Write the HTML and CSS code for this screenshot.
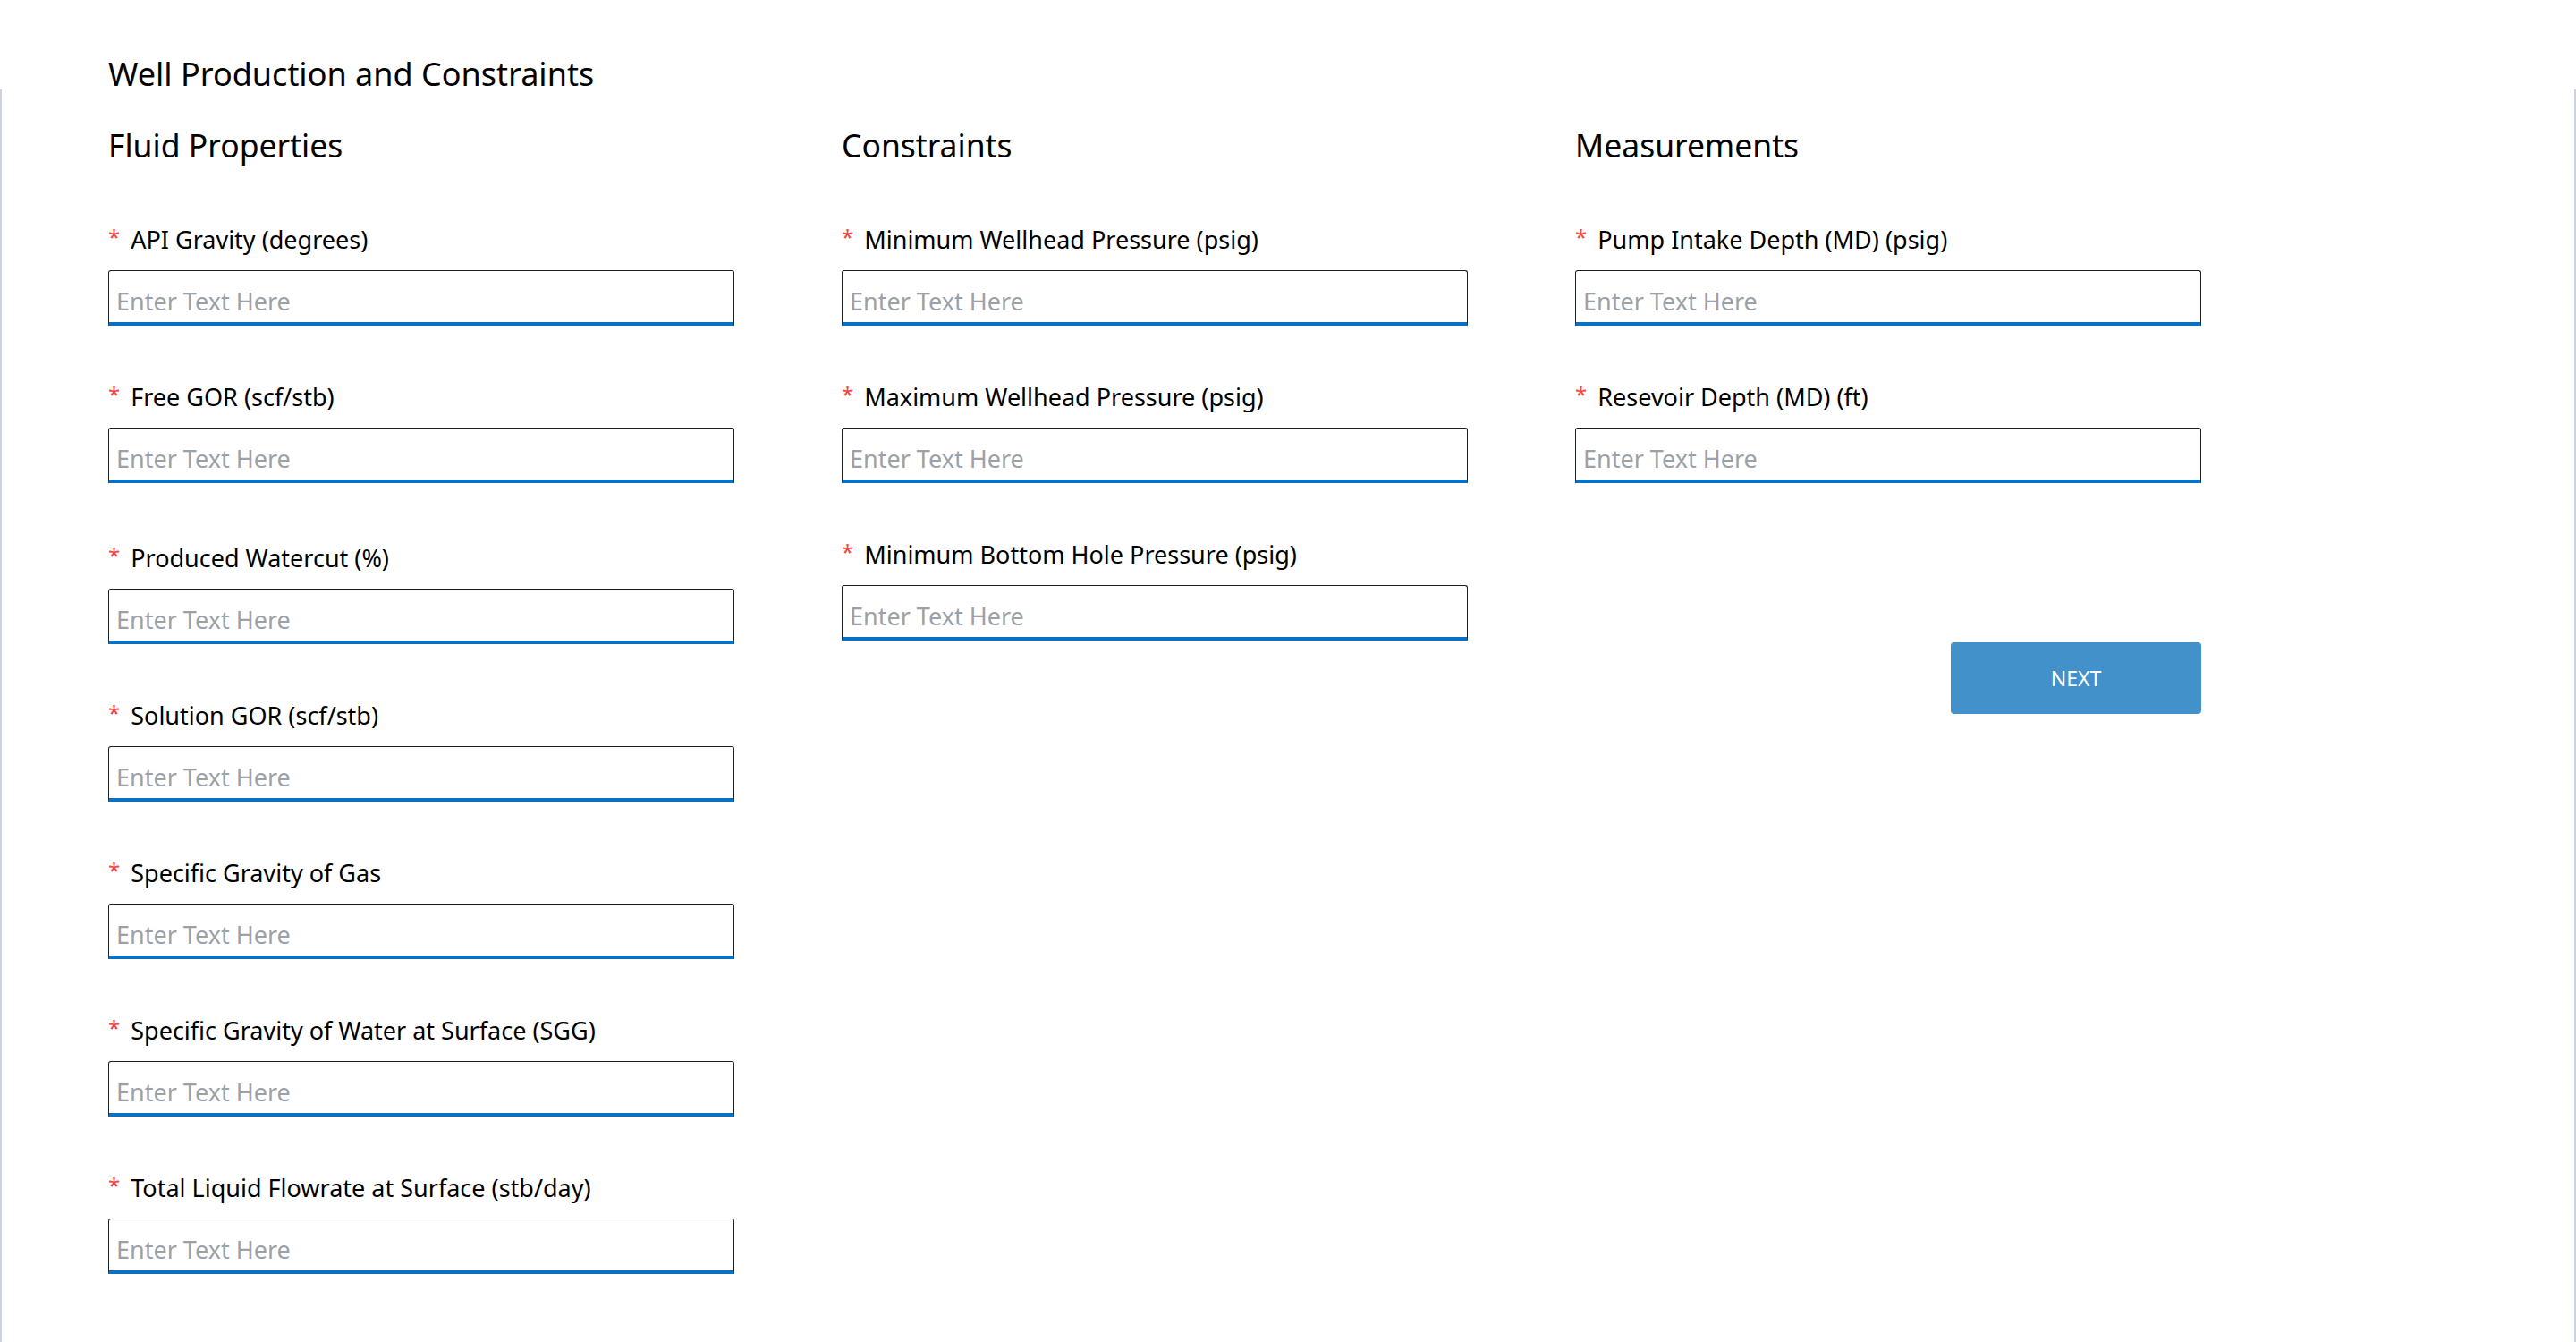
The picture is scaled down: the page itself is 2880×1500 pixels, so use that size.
FILE: index.html
```html
<!DOCTYPE html>
<html lang="en">
<head>
<meta charset="utf-8">
<title>Well Production and Constraints</title>
<link rel="stylesheet" href="styles.css">
</head>
<body>
<header class="page-header">
  <h1 class="page-title">Well Production and Constraints</h1>
</header>
<main class="panel">
  <div class="columns">
    <section class="column">
      <h2 class="section-title">Fluid Properties</h2>
      <div class="fields">
        <div class="field">
          <label class="field-label"><span class="req">*</span>API Gravity (degrees)</label>
          <input class="text-input" type="text" placeholder="Enter Text Here">
        </div>
        <div class="field">
          <label class="field-label"><span class="req">*</span>Free GOR (scf/stb)</label>
          <input class="text-input" type="text" placeholder="Enter Text Here">
        </div>
        <div class="field field-shift">
          <label class="field-label"><span class="req">*</span>Produced Watercut (%)</label>
          <input class="text-input" type="text" placeholder="Enter Text Here">
        </div>
        <div class="field">
          <label class="field-label"><span class="req">*</span>Solution GOR (scf/stb)</label>
          <input class="text-input" type="text" placeholder="Enter Text Here">
        </div>
        <div class="field">
          <label class="field-label"><span class="req">*</span>Specific Gravity of Gas</label>
          <input class="text-input" type="text" placeholder="Enter Text Here">
        </div>
        <div class="field">
          <label class="field-label"><span class="req">*</span>Specific Gravity of Water at Surface (SGG)</label>
          <input class="text-input" type="text" placeholder="Enter Text Here">
        </div>
        <div class="field">
          <label class="field-label"><span class="req">*</span>Total Liquid Flowrate at Surface (stb/day)</label>
          <input class="text-input" type="text" placeholder="Enter Text Here">
        </div>
      </div>
    </section>
    <section class="column">
      <h2 class="section-title">Constraints</h2>
      <div class="fields">
        <div class="field">
          <label class="field-label"><span class="req">*</span>Minimum Wellhead Pressure (psig)</label>
          <input class="text-input" type="text" placeholder="Enter Text Here">
        </div>
        <div class="field">
          <label class="field-label"><span class="req">*</span>Maximum Wellhead Pressure (psig)</label>
          <input class="text-input" type="text" placeholder="Enter Text Here">
        </div>
        <div class="field">
          <label class="field-label"><span class="req">*</span>Minimum Bottom Hole Pressure (psig)</label>
          <input class="text-input" type="text" placeholder="Enter Text Here">
        </div>
      </div>
    </section>
    <section class="column">
      <h2 class="section-title">Measurements</h2>
      <div class="fields">
        <div class="field">
          <label class="field-label"><span class="req">*</span>Pump Intake Depth (MD) (psig)</label>
          <input class="text-input" type="text" placeholder="Enter Text Here">
        </div>
        <div class="field">
          <label class="field-label"><span class="req">*</span>Resevoir Depth (MD) (ft)</label>
          <input class="text-input" type="text" placeholder="Enter Text Here">
        </div>
      </div>
      <div class="actions">
        <button class="btn-next" type="button">NEXT</button>
      </div>
    </section>
  </div>
</main>
</body>
</html>
```

FILE: styles.css
```css
* {
  box-sizing: border-box;
}

html, body {
  margin: 0;
  padding: 0;
  background: #ffffff;
}

body {
  font-family: "Noto Sans", "Open Sans", sans-serif;
  color: #000000;
}

.page-header {
  height: 100px;
  padding: 66px 0 0 121px;
}

.page-title {
  margin: 0;
  font-size: 36px;
  line-height: 34px;
  font-weight: 400;
  white-space: nowrap;
}

.panel {
  min-height: 1400px;
  border-left: 2px solid #cdd3dc;
  border-right: 2px solid #cdd3dc;
  padding: 42px 0 0 119px;
}

.columns {
  display: grid;
  grid-template-columns: 700px 700px 700px;
  column-gap: 120px;
  align-items: start;
}

.column {
  display: flex;
  flex-direction: column;
}

.section-title {
  margin: 0 0 68px 0;
  font-size: 35.5px;
  line-height: 40px;
  font-weight: 400;
  white-space: nowrap;
}

.fields {
  display: flex;
  flex-direction: column;
  gap: 62px;
}

.field {
  display: flex;
  flex-direction: column;
}

.field-shift {
  margin-top: 4px;
}

.field-label {
  font-size: 27px;
  line-height: 36px;
  margin-bottom: 16px;
  white-space: nowrap;
}

.req {
  color: #f2453d;
  font-size: 24px;
  margin-right: 12px;
  display: inline-block;
  vertical-align: top;
  line-height: 30px;
}

.text-input {
  display: block;
  width: 700px;
  height: 62px;
  margin: 0;
  padding: 9px 8px 0 8px;
  border: 1px solid #1e1e1e;
  border-bottom: 4px solid #0a70c2;
  border-radius: 3px 3px 0 0;
  background: #ffffff;
  font-family: "Noto Sans", "Open Sans", sans-serif;
  font-size: 27px;
  line-height: 48px;
  color: #000000;
  outline: none;
}

.text-input::placeholder {
  color: #9aa1a9;
  opacity: 1;
}

.actions {
  display: flex;
  justify-content: flex-end;
  margin-top: 178px;
}

.btn-next {
  width: 280px;
  height: 80px;
  border: none;
  border-radius: 4px;
  background: #4391ca;
  color: #ffffff;
  font-family: "Noto Sans", "Open Sans", sans-serif;
  font-size: 23px;
  padding: 0;
  cursor: pointer;
}
```
